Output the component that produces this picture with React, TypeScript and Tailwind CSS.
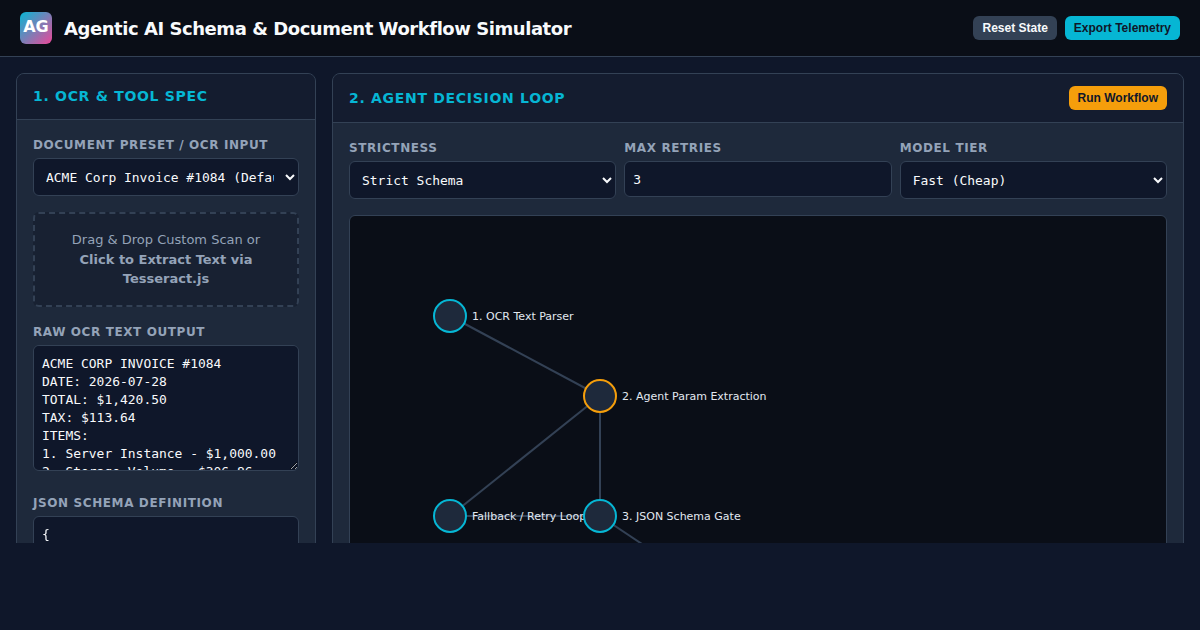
const sans = 'font-["DejaVu_Sans",sans-serif]';

const ocrText = `ACME CORP INVOICE #1084
DATE: 2026-07-28
TOTAL: $1,420.50
TAX: $113.64
ITEMS:
1. Server Instance - $1,000.00
2. Storage Volume - $306.86`;

const schemaText = `{
  "type": "object",
  "properties": {
    "invoice_id": { "type": "string" },
    "total": { "type": "number" }
  }
}`;

const nodes = [
  { x: 100, y: 100, label: '1. OCR Text Parser', stroke: '#06b6d4' },
  { x: 250, y: 180, label: '2. Agent Param Extraction', stroke: '#f59e0b' },
  { x: 100, y: 300, label: 'Fallback / Retry Loop', stroke: '#06b6d4' },
  { x: 250, y: 300, label: '3. JSON Schema Gate', stroke: '#06b6d4' },
];

const edges = [
  [100, 100, 250, 180],
  [250, 180, 250, 300],
  [250, 180, 100, 300],
  [100, 300, 250, 300],
  [250, 300, 400, 400],
];

function Label({ children }: { children: React.ReactNode }) {
  return (
    <label className="block pt-0.5 mb-1.5 text-xs leading-[14px] font-bold tracking-[0.6px] text-[#94a3b8]">
      {children}
    </label>
  );
}

const fieldClass =
  'w-full bg-[#0f172a] border border-[#334155] rounded-md text-[12.96px] text-[#f8fafc] font-["DejaVu_Sans_Mono",monospace]';

function WorkflowGraph() {
  return (
    <div className="h-[500px] bg-[#0a0e17] border border-[#334155] rounded-md overflow-hidden">
      <svg width="816" height="498" className="block">
        {edges.map(([x1, y1, x2, y2], i) => (
          <line key={i} x1={x1} y1={y1} x2={x2} y2={y2} stroke="#334155" strokeWidth="2" />
        ))}
        {nodes.map((n) => (
          <g key={n.label}>
            <circle cx={n.x} cy={n.y} r="16" fill="#1e293b" stroke={n.stroke} strokeWidth="2" />
            <text x={n.x + 22} y={n.y + 4} fontSize="11" fill="#e2e8f0" fontFamily="DejaVu Sans">
              {n.label}
            </text>
          </g>
        ))}
      </svg>
    </div>
  );
}

export default function App() {
  return (
    <div className={`h-[630px] bg-[#0f172a] overflow-hidden ${sans}`}>
      {/* Header */}
      <header className="h-[57px] px-5 flex items-center justify-between bg-[#0a0e17] border-b border-[#334155]">
        <div className="flex items-center gap-3">
          <div className="w-8 h-8 pb-0.5 rounded-md bg-linear-to-br/srgb from-[#06b6d4] to-[#ec4899] flex items-center justify-center text-white font-bold text-base">
            AG
          </div>
          <h1 className="pt-0.5 text-lg tracking-tight font-bold text-[#f8fafc]">Agentic AI Schema &amp; Document Workflow Simulator</h1>
        </div>
        <div className='flex gap-2 text-xs font-bold font-["Liberation_Sans",sans-serif]'>
          <button className="h-6 px-[9px] rounded-md bg-[#334155] text-[#f8fafc]">Reset State</button>
          <button className="h-6 px-[9px] rounded-md bg-[#06b6d4] text-[#0f172a]">Export Telemetry</button>
        </div>
      </header>

      <main className="h-[486px] overflow-hidden flex items-start gap-4 p-4">
        {/* Panel 1 */}
        <section className="w-[300px] shrink-0 bg-[#1e293b] border border-[#334155] rounded-lg overflow-hidden">
          <div className="h-[46px] px-4 flex items-center bg-[#141c2f] border-b border-[#334155]">
            <h2 className="pb-0.5 text-sm font-bold tracking-[0.7px] text-[#06b6d4]">1. OCR &amp; TOOL SPEC</h2>
          </div>
          <div className="p-4">
            <Label>DOCUMENT PRESET / OCR INPUT</Label>
            <select className={`${fieldClass} h-[38px] px-2 mb-4`}>
              <option>ACME Corp Invoice #1084 (Default)</option>
            </select>

            <div className="mb-4 p-4 border-2 border-dashed border-[#334155] rounded-md bg-[#182132] text-center text-[13px] leading-[19.5px] text-[#94a3b8]">
              Drag &amp; Drop Custom Scan or
              <br />
              <strong>Click to Extract Text via Tesseract.js</strong>
            </div>

            <div className="mb-4">
              <Label>RAW OCR TEXT OUTPUT</Label>
              <textarea rows={6} readOnly className={`${fieldClass} px-2 pt-[9px] pb-[7px] leading-[18px]`} value={ocrText} />
            </div>

            <Label>JSON SCHEMA DEFINITION</Label>
            <textarea rows={10} readOnly className={`${fieldClass} px-2 pt-[9px] pb-[7px] leading-[18px]`} value={schemaText} />
          </div>
        </section>

        {/* Panel 2 */}
        <section className="flex-1 min-w-0 bg-[#1e293b] border border-[#334155] rounded-lg overflow-hidden">
          <div className="h-[49px] px-4 flex items-center justify-between bg-[#141c2f] border-b border-[#334155]">
            <h2 className="text-sm font-bold tracking-[0.7px] text-[#06b6d4]">2. AGENT DECISION LOOP</h2>
            <button className='h-6 px-[9px] rounded-md bg-[#f59e0b] text-[#0f172a] text-xs font-bold font-["Liberation_Sans",sans-serif]'>
              Run Workflow
            </button>
          </div>
          <div className="p-4">
            <div className="grid grid-cols-3 gap-2 mb-4">
              <div>
                <Label>STRICTNESS</Label>
                <select className={`${fieldClass} h-[38px] px-2`}>
                  <option>Strict Schema</option>
                </select>
              </div>
              <div>
                <Label>MAX RETRIES</Label>
                <input type="number" readOnly value="3" className={`${fieldClass} h-9 px-2 pt-px`} />
              </div>
              <div>
                <Label>MODEL TIER</Label>
                <select className={`${fieldClass} h-[38px] px-2`}>
                  <option>Fast (Cheap)</option>
                </select>
              </div>
            </div>
            <WorkflowGraph />
          </div>
        </section>
      </main>
    </div>
  );
}
